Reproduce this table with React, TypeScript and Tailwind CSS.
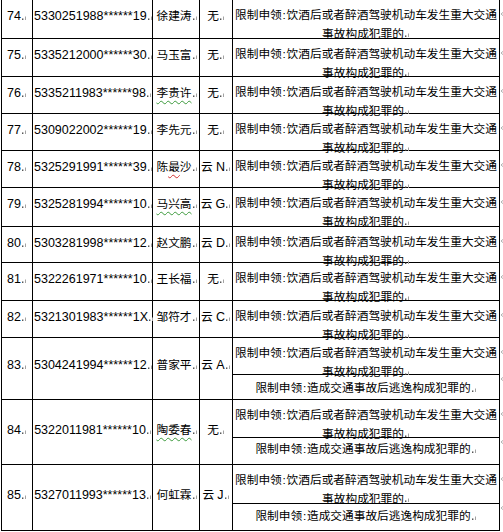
import React from 'react';

// Word-style table: licence restriction list, rows 74–85

type Row = {
  no: string;
  id: string;
  name: React.ReactNode;
  lic: React.ReactNode;
  h: number;
  pt: number;
  split?: { top: number; pt2: number };
};

const GreenWave: React.FC<{ children: React.ReactNode }> = ({ children }) => (
  <span className="underline decoration-wavy decoration-[#3c9a3c] decoration-1 underline-offset-[3px]">{children}</span>
);

const RedWave: React.FC<{ children: React.ReactNode }> = ({ children }) => (
  <span className="underline decoration-wavy decoration-[#d03030] decoration-1 underline-offset-[3px]">{children}</span>
);

// latin runs render a touch larger than the CJK text, like the Word doc
const Lat: React.FC<{ children: React.ReactNode }> = ({ children }) => (
  <span className="text-[12.5px]">{children}</span>
);

const yun = (l: string) => (
  <>
    云 <Lat>{l}</Lat>
  </>
);

const ROWS: Row[] = [
  { no: '74', id: '5330251988******19', name: '徐建涛', lic: '无', h: 39, pt: 7 },
  { no: '75', id: '5335212000******30', name: '马玉富', lic: '无', h: 38, pt: 7 },
  { no: '76', id: '5335211983******98', name: <GreenWave>李贵许</GreenWave>, lic: '无', h: 37, pt: 7 },
  { no: '77', id: '5309022002******19', name: '李先元', lic: '无', h: 37, pt: 7 },
  { no: '78', id: '5325291991******39', name: <>陈<RedWave>最</RedWave>沙</>, lic: yun('N'), h: 37, pt: 7 },
  { no: '79', id: '5325281994******10', name: <GreenWave>马兴高</GreenWave>, lic: yun('G'), h: 39, pt: 7 },
  { no: '80', id: '5303281998******12', name: '赵文鹏', lic: yun('D'), h: 36, pt: 7 },
  { no: '81', id: '5322261971******10', name: '王长福', lic: '无', h: 38, pt: 7 },
  { no: '82', id: '5321301983******1X', name: '邹符才', lic: yun('C'), h: 37, pt: 7 },
  { no: '83', id: '5304241994******12', name: '普家平', lic: yun('A'), h: 62, pt: 18, split: { top: 37, pt2: 4 } },
  { no: '84', id: '5322011981******10', name: <GreenWave>陶委春</GreenWave>, lic: '无', h: 65, pt: 21, split: { top: 38, pt2: 2 } },
  { no: '85', id: '5327011993******13', name: '何虹霖', lic: yun('J'), h: 66, pt: 21, split: { top: 39, pt2: 3 } },
];

// end-of-cell formatting mark
const Mark = () => (
  <svg className="inline-block ml-[1px]" width="5" height="6" viewBox="0 0 5 6">
    <rect x="0" y="4.5" width="1.4" height="1.4" fill="#444" />
    <rect x="3" y="2.5" width="1" height="3.5" fill="#a3a3a3" />
  </svg>
);

// end-of-row formatting mark, sits outside the table
const RowMark = () => (
  <svg width="4" height="6" viewBox="0 0 4 6">
    <path d="M3.5 1 L1 3 L3.5 5" fill="none" stroke="#b0b0b0" strokeWidth="1" />
  </svg>
);

const Colon = () => <span className="px-[0.8px]">:</span>;

export default function App() {
  return (
    <div className="w-[503px] h-[532px] overflow-hidden bg-white text-black text-[11.7px] leading-[18px] font-['Liberation_Sans','Noto_Sans_CJK_SC',sans-serif]">
      <div className="ml-[1px] flex flex-col">
        {ROWS.map((r) => (
          <div key={r.no} className="flex" style={{ height: r.h }}>
            <div className="w-[32px] shrink-0 border-l border-r border-b border-black text-center whitespace-nowrap" style={{ paddingTop: r.pt }}>
              <Lat>{r.no}</Lat>
              <Mark />
            </div>
            <div className="w-[120px] shrink-0 border-r border-b border-black text-center whitespace-nowrap pl-[1px]" style={{ paddingTop: r.pt }}>
              <Lat>{r.id}</Lat>
              <Mark />
            </div>
            <div className="w-[47px] shrink-0 border-r border-b border-black text-center whitespace-nowrap pl-[2px]" style={{ paddingTop: r.pt }}>
              {r.name}
              <Mark />
            </div>
            <div className="w-[33px] shrink-0 border-r border-b border-black text-center whitespace-nowrap" style={{ paddingTop: r.pt }}>
              {r.lic}
              <Mark />
            </div>
            <div className="w-[267px] shrink-0 border-r border-b border-black flex flex-col leading-[18.5px]">
              <div
                className={`text-center whitespace-nowrap pt-[6px] ${r.split ? 'border-b border-black' : 'flex-1'}`}
                style={r.split ? { height: r.split.top } : undefined}
              >
                <div>
                  限制申领<Colon />饮酒后或者醉酒驾驶机动车发生重大交通
                </div>
                <div>
                  事故构成犯罪的
                  <Mark />
                </div>
              </div>
              {r.split && (
                <div className="flex-1 text-center whitespace-nowrap" style={{ paddingTop: r.split.pt2 }}>
                  限制申领<Colon />造成交通事故后逃逸构成犯罪的
                  <Mark />
                </div>
              )}
            </div>
            <div className="w-[3px] shrink-0 flex flex-col">
              <div className="pt-[11px]">
                <RowMark />
              </div>
              {r.split && (
                <div style={{ paddingTop: r.split.top - 16 }}>
                  <RowMark />
                </div>
              )}
            </div>
          </div>
        ))}
      </div>
    </div>
  );
}
